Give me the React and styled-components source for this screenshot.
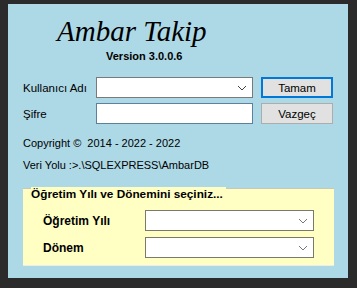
import React from "react";
import styled, { createGlobalStyle } from "styled-components";

const GlobalStyle = createGlobalStyle`
  html, body {
    margin: 0;
    padding: 0;
    background: #2b2b2b;
  }
`;

const Window = styled.div`
  width: 340px;
  height: 274px;
  margin: 4px 0 0 8px;
  background: #add8e6;
  box-sizing: border-box;
  padding: 0 0 0 15px;
  font-family: "Liberation Sans", Arial, sans-serif;
  font-size: 11px;
  color: #000;
  display: flex;
  flex-direction: column;
  align-items: flex-start;
`;

const Header = styled.div`
  width: 200px;
  padding: 10px 0 0 34px;
  display: flex;
  flex-direction: column;
  align-items: flex-start;
`;

const Title = styled.div`
  font-family: "Liberation Serif", "DejaVu Serif", serif;
  font-style: italic;
  font-size: 29px;
  line-height: 34px;
`;

const Version = styled.div`
  font-weight: bold;
  font-size: 11px;
  line-height: 14px;
  margin-top: 1px;
  padding-left: 49px;
`;

const Form = styled.div`
  display: grid;
  grid-template-columns: 65px 157px 72px;
  column-gap: 8px;
  row-gap: 5px;
  margin-top: 14px;
  align-items: center;
`;

const Label = styled.div`
  font-weight: ${(p) => (p.$bold ? "bold" : "normal")};
  font-size: ${(p) => (p.$bold ? "12px" : "11.5px")};
  line-height: 14px;
`;

const Field = styled.div`
  height: 21px;
  box-sizing: border-box;
  background: #fff;
  border: 1px solid ${(p) => p.$border || "#7a7a7a"};
  display: flex;
  align-items: center;
  justify-content: flex-end;
  padding-right: 5px;
`;

const Button = styled.div`
  height: 21px;
  box-sizing: border-box;
  background: #e1e1e1;
  border: ${(p) => (p.$default ? "2px solid #0078d7" : "1px solid #adadad")};
  display: flex;
  align-items: center;
  justify-content: center;
  font-size: 11.5px;
`;

const Info = styled.div`
  line-height: 14px;
  margin-top: ${(p) => p.$top}px;
  white-space: pre;
`;

const Group = styled.div`
  width: 311px;
  box-sizing: border-box;
  margin-top: 16px;
  padding: 0 0 7px 20px;
  background: #ffffc4;
  border-top: 1px solid #c8c8b8;
  border-bottom: 1px solid #ececec;
  display: grid;
  grid-template-columns: 102px 169px;
  row-gap: 6px;
  align-items: center;
`;

const Legend = styled.div`
  grid-column: 1 / -1;
  justify-self: start;
  font-weight: bold;
  font-size: 11.8px;
  line-height: 14px;
  margin: -2px 0 3px -12px;
  padding: 0 3px 0 0;
  background: #ffffc4;
`;

const Chevron = ({ color = "#444" }) => (
  <svg width="10" height="6" viewBox="0 0 10 6">
    <path d="M1 1 L5 5 L9 1" fill="none" stroke={color} strokeWidth="1" />
  </svg>
);

export default function App() {
  return (
    <>
      <GlobalStyle />
      <Window>
        <Header>
          <Title>Ambar Takip</Title>
          <Version>Version 3.0.0.6</Version>
        </Header>
        <Form>
          <Label>Kullanıcı Adı</Label>
          <Field>
            <Chevron />
          </Field>
          <Button $default>Tamam</Button>
          <Label>Şifre</Label>
          <Field $border="#5f7f9f" />
          <Button>Vazgeç</Button>
        </Form>
        <Info $top={12}>Copyright ©  2014 - 2022 - 2022</Info>
        <Info $top={8}>Veri Yolu :&gt;.\SQLEXPRESS\AmbarDB</Info>
        <Group>
          <Legend>Öğretim Yılı ve Dönemini seçiniz...</Legend>
          <Label $bold>Öğretim Yılı</Label>
          <Field $border="#7a7a6a">
            <Chevron color="#777" />
          </Field>
          <Label $bold>Dönem</Label>
          <Field $border="#7a7a6a">
            <Chevron color="#777" />
          </Field>
        </Group>
      </Window>
    </>
  );
}
